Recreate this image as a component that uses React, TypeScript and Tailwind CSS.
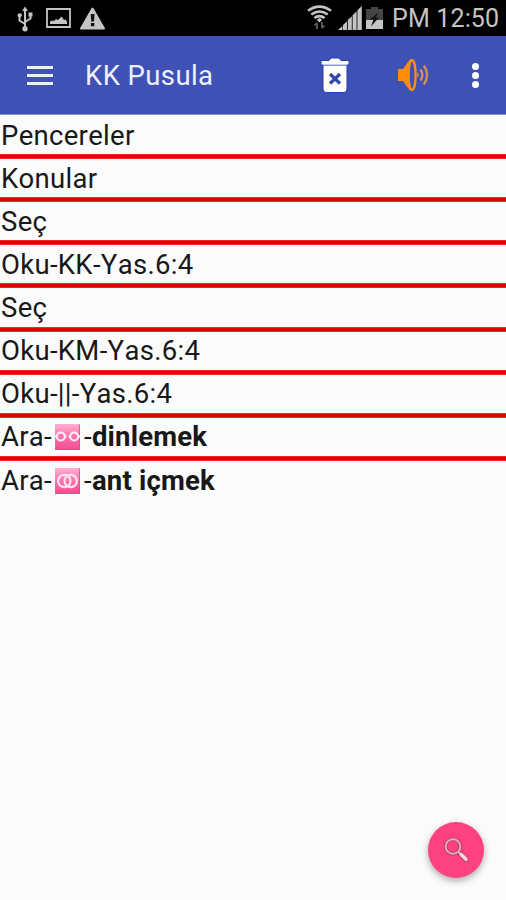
import type { ReactNode } from "react";

function StatusBar() {
  return (
    <header className="flex h-9 items-center bg-black text-[#c4c4c4]">
      <svg className="mt-px ml-[17px] h-[26px] w-4 shrink-0" viewBox="0 0 16 26" fill="none" stroke="currentColor" strokeWidth="2">
        <path d="M8 4V23M8 18L2.5 14.5V9M8 16L13.5 12.5V8" />
        <path d="M8 .5L10.8 5H5.2Z" fill="currentColor" stroke="none" />
        <circle cx="8" cy="22.7" r="2.7" fill="currentColor" stroke="none" />
        <circle cx="2.7" cy="9.3" r="2.1" fill="currentColor" stroke="none" />
        <path d="M11.5 6.5h4v4h-4z" fill="currentColor" stroke="none" />
      </svg>
      <svg className="ml-[13px] h-5 w-[25px] shrink-0" viewBox="0 0 25 20">
        <path d="M1 1H24V19H1Z" fill="none" stroke="currentColor" strokeWidth="1.8" />
        <path d="M4 16V13.8L6 12.5L8 13L10 11L12 12L15.5 8.5L18 12L19.5 11.5L21 13.5V16Z" fill="currentColor" />
      </svg>
      <svg className="ml-[9px] h-[23px] w-[25px] shrink-0" viewBox="0 0 25 23">
        <path d="M12.5 1.5L24 21.5H1Z" fill="currentColor" stroke="currentColor" strokeWidth="2" strokeLinejoin="round" />
        <path d="M10.7 7h3.8l-.5 7.5h-2.8zM10.9 16h3.4v3.2h-3.4z" fill="#111" />
      </svg>
      <svg className="ml-auto h-[26px] w-[25px] shrink-0" viewBox="0 0 25 26" fill="none" stroke="currentColor" strokeWidth="2.5">
        <path d="M1 5.8Q12.5-2.6 24 5.8M4.3 9.6Q12.5 3.5 20.7 9.6M7.4 13Q12.5 9.2 17.6 13" />
        <path d="M12.5 13L15.2 14.8L12.5 17.5L9.8 14.8Z" fill="currentColor" stroke="none" />
        <path d="M10 24V18M7.7 20.5L10 18M15 17V23M17.3 20.5L15 23" stroke="#555" strokeWidth="2" />
      </svg>
      <svg className="ml-[6px] h-6 w-6 shrink-0" viewBox="0 0 24 24" fill="currentColor">
        <path d="M0 24L4.4 20V24ZM5 19L9 15.3V24H5ZM9.8 14L13.8 10.3V24H9.8ZM14.6 9.2L18.6 5.3V24H14.6ZM19.4 4.3L23.8 0V24H19.4Z" />
      </svg>
      <svg className="ml-[4px] h-6 w-[17px] shrink-0" viewBox="0 0 17 24">
        <path d="M5 1H12V3H17V14H0V3H5Z" fill="#454545" />
        <path d="M0 14H17V23H0Z" fill="currentColor" />
        <path d="M13 6L3.5 13.5H7.5L5 20.5L13 11.5H9.5Z" fill="#151515" />
      </svg>
      <span className="mt-[2px] mr-[7px] ml-[9px] w-[107px] shrink-0 text-[25px] leading-9 tracking-[0.15px] whitespace-nowrap">PM 12:50</span>
    </header>
  );
}

function Toolbar() {
  return (
    <nav className="flex h-[79px] items-center border-b border-[#8990c3] bg-[#3f51b5] text-white">
      <button aria-label="Menu" className="ml-[27px] flex w-[26px] flex-col gap-[5px]">
        <span className="h-[3px] bg-[#eef0ff]" />
        <span className="h-[3px] bg-[#eef0ff]" />
        <span className="h-[3px] bg-[#eef0ff]" />
      </button>
      <h1 className="mt-[2px] ml-[32px] text-[27.5px] leading-9 font-normal tracking-[0.4px] whitespace-nowrap text-[#eef0ff]">KK Pusula</h1>
      <svg className="ml-auto h-[38px] w-[30px] shrink-0" viewBox="0 0 30 38">
        <path d="M1 4.5H9L11 2H19L21 4.5H29V9H27V33Q27 36.5 23.5 36.5H6.5Q3 36.5 3 33V9H1Z" fill="white" stroke="#203fae" strokeWidth="1" />
        <path d="M3 9.2H27" stroke="#4f67c4" strokeWidth="1" />
        <path d="M10 18L20 27.5M20 18L10 27.5" stroke="#3348a8" strokeWidth="3.2" />
      </svg>
      <svg className="ml-[47px] h-[34px] w-8 shrink-0" viewBox="0 0 32 34" fill="none">
        <path d="M1 11H6L12.5 2Q14 .5 15.5 1.5Q12.5 8 12.5 17Q12.5 27 15.5 32.5Q13.5 33.5 11 30L6 23H1Z" fill="#ff8b0b" />
        <ellipse cx="15" cy="17" rx="3.6" ry="15" stroke="#f88d20" strokeWidth="2.2" />
        <path d="M20.2 14Q23.3 17 20.2 20Z" fill="#dd8851" />
        <path d="M23.4 11.5Q27.4 17 23.4 22.5" stroke="#d58963" strokeWidth="2.4" />
        <path d="M26.9 7.5Q33.2 17 26.9 26.5" stroke="#d28c5e" strokeWidth="2.4" />
      </svg>
      <button aria-label="More options" className="mr-[27px] ml-[43px] flex w-[7px] flex-col gap-[2px]">
        <span className="size-[7px] rounded-full bg-white" />
        <span className="size-[7px] rounded-full bg-white" />
        <span className="size-[7px] rounded-full bg-white" />
      </button>
    </nav>
  );
}

function Row({ children, last = false }: { children: ReactNode; last?: boolean }) {
  return (
    <li className="flex h-[43.15px] flex-col">
      <div className="flex h-[38px] items-center pt-px pl-px text-[27.5px] leading-[38px] tracking-[0.3px] whitespace-nowrap [font-kerning:none]">{children}</div>
      {!last && <div className="h-[5px] shrink-0 border-t border-b border-[#ee2b29] bg-[#dd0505]" />}
    </li>
  );
}

function PinkTile({ apart }: { apart: boolean }) {
  return (
    <svg className="mr-[4px] ml-[3px] h-[26px] w-[25px] shrink-0" viewBox="0 0 25 26" fill="none">
      <defs>
        <linearGradient id="tile" x1="0" y1="0" x2="0" y2="1">
          <stop stopColor="#ffb0d0" />
          <stop offset=".55" stopColor="#fa6ca6" />
          <stop offset="1" stopColor="#ef4d91" />
        </linearGradient>
      </defs>
      <path d="M0 0H25V26H0Z" fill="url(#tile)" />
      <path d="M.5 25.5H24.5V.5" stroke="#df4784" strokeOpacity=".7" />
      {apart ? (
        <g stroke="#fff0f8" strokeWidth="2">
          <circle cx="5.8" cy="12.5" r="4" />
          <circle cx="19.2" cy="12.5" r="4" />
          <path d="M0 12.5H2M9.5 12.5H11.5M13.5 12.5H15.5M23 12.5H25" />
        </g>
      ) : (
        <g stroke="#ffe1ef" strokeWidth="2.2">
          <circle cx="9.3" cy="13" r="6.2" />
          <circle cx="15.7" cy="13" r="6.2" />
        </g>
      )}
    </svg>
  );
}

const entries = ["Pencereler", "Konular", "Seç", "Oku-KK-Yas.6:4", "Seç", "Oku-KM-Yas.6:4", "Oku-||-Yas.6:4"];

export default function App() {
  return (
    <div className="relative h-[900px] w-[506px] overflow-hidden bg-[#fbfbfb] font-['Roboto',sans-serif] text-[#181818]">
      <StatusBar />
      <Toolbar />
      <ul className="pt-px">
        {entries.map((text, index) => (
          <Row key={index}>{text}</Row>
        ))}
        <Row>
          Ara-<PinkTile apart />-<b className="tracking-[0.2px]">dinlemek</b>
        </Row>
        <Row last>
          Ara-<PinkTile apart={false} />-<b className="tracking-[0.2px]">ant içmek</b>
        </Row>
      </ul>
      <button aria-label="Search" className="absolute top-[822px] left-[428px] flex size-14 items-center justify-center rounded-full bg-[#ff4081] shadow-[0_3px_7px_rgba(0,0,0,0.32)]">
        <svg className="h-[26px] w-[26px]" viewBox="0 0 26 26" fill="none">
          <circle cx="10" cy="9.5" r="7.3" stroke="#a04362" strokeWidth="3.4" />
          <path d="M15.5 15L23 22.5" stroke="#a04362" strokeWidth="5" strokeLinecap="round" />
          <circle cx="10" cy="9.5" r="7.3" stroke="#efa9bf" strokeWidth="1.9" />
          <path d="M15 14.5L18 17.5" stroke="#efa9bf" strokeWidth="2" />
          <path d="M18.2 17.5L23 22.3" stroke="#ffd3e0" strokeWidth="3.6" strokeLinecap="round" />
        </svg>
      </button>
    </div>
  );
}
